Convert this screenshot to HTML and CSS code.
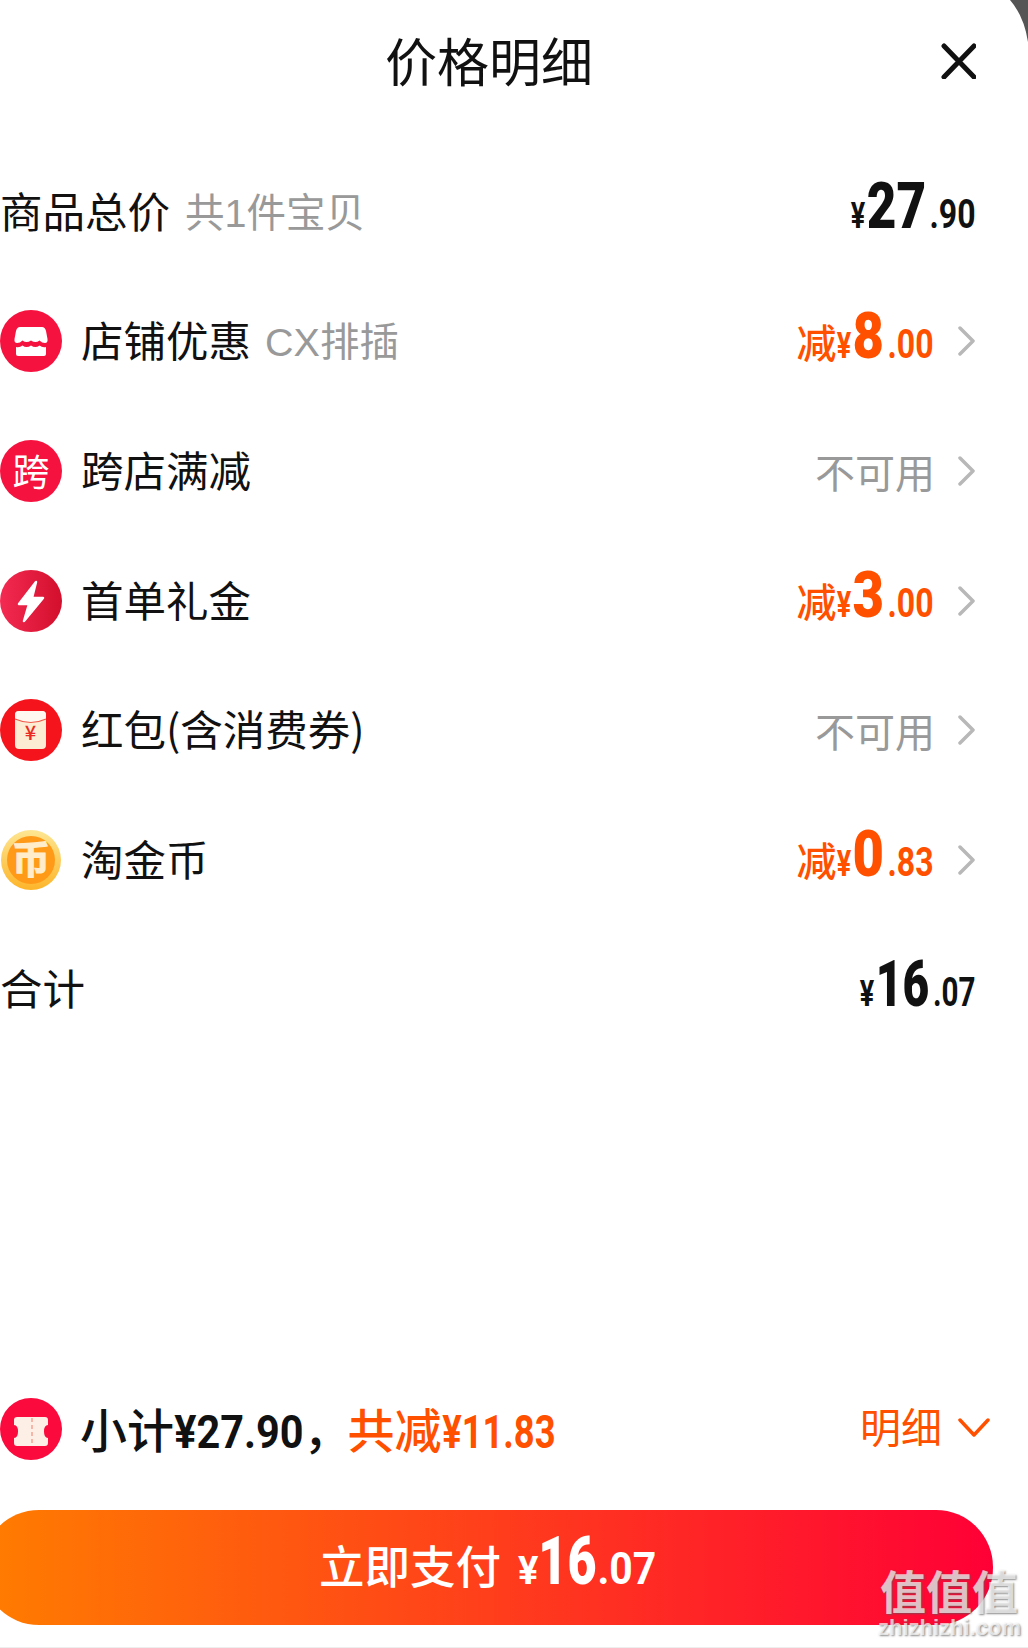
FILE: index.html
```html
<!DOCTYPE html>
<html lang="zh-CN">
<head>
    <meta charset="UTF-8">
    <meta name="viewport" content="width=device-width, initial-scale=1.0">
    <title>价格明细</title>
    <link rel="stylesheet" href="styles.css">
</head>
<body>
    <div class="sheet">
        <svg class="corner" width="20" height="42" viewBox="0 0 20 42"><path d="M2 0Q16 16 20 42V0Z" fill="#555"/></svg>

        <header class="header">
            <span></span>
            <h1>价格明细</h1>
            <svg class="close" width="36" height="36" viewBox="0 0 36 36"><path d="M4 3L34 34M34 3L4 34" stroke="#111" stroke-width="5" stroke-linecap="round"/></svg>
        </header>

        <div class="rows">
            <div class="row">
                <div class="label">商品总价<span class="note first">共1件宝贝</span></div>
                <div class="price"><span class="yen">¥</span><span class="big two">27</span><span class="cents">.90</span></div>
            </div>

            <div class="row">
                <div class="label">
                    <svg class="icon" viewBox="0 0 62 62"><circle cx="31" cy="31" r="31" fill="#f6123f"/><path d="M20 17H42Q45 17 46 21L47.500 29Q48 33 45 33Q42 33 39.500 30.500Q35.500 33.500 31 30.500Q26.500 33.500 22.500 30.500Q20 33 17 33Q14 33 14.500 29L16 21Q17 17 20 17Z" fill="#fff"/><path d="M16 37Q19.500 38 22.500 35.500Q26.500 38.500 31 35.500Q35.500 38.500 39.500 35.500Q42.500 38 46 37V44Q46 46 44 46H18Q16 46 16 44Z" fill="#fff"/></svg>
                    店铺优惠<span class="note">CX排插</span>
                </div>
                <div class="value">
                    <div class="price off"><span class="jian">减</span><span class="yen">¥</span><span class="big">8</span><span class="cents">.00</span></div>
                    <svg class="arrow" width="18" height="30" viewBox="0 0 18 30"><path d="M3 2L16 15L3 28" fill="none" stroke="#b8b8b8" stroke-width="3.500" stroke-linecap="round" stroke-linejoin="round"/></svg>
                </div>
            </div>

            <div class="row">
                <div class="label">
                    <div class="icon icon-text">跨</div>
                    跨店满减
                </div>
                <div class="value">
                    <span class="na">不可用</span>
                    <svg class="arrow" width="18" height="30" viewBox="0 0 18 30"><path d="M3 2L16 15L3 28" fill="none" stroke="#b8b8b8" stroke-width="3.500" stroke-linecap="round" stroke-linejoin="round"/></svg>
                </div>
            </div>

            <div class="row">
                <div class="label">
                    <svg class="icon" viewBox="0 0 62 62"><defs><linearGradient id="boltBg"><stop offset="0" stop-color="#f42a52"/><stop offset="1" stop-color="#d20f2c"/></linearGradient></defs><circle cx="31" cy="31" r="31" fill="url(#boltBg)"/><path d="M36 12L19 34H29L24 51L43 28H32Z" fill="#fff" stroke="#fff" stroke-width="2.500" stroke-linejoin="round"/></svg>
                    首单礼金
                </div>
                <div class="value">
                    <div class="price off"><span class="jian">减</span><span class="yen">¥</span><span class="big">3</span><span class="cents">.00</span></div>
                    <svg class="arrow" width="18" height="30" viewBox="0 0 18 30"><path d="M3 2L16 15L3 28" fill="none" stroke="#b8b8b8" stroke-width="3.500" stroke-linecap="round" stroke-linejoin="round"/></svg>
                </div>
            </div>

            <div class="row">
                <div class="label">
                    <svg class="icon" viewBox="0 0 62 62"><circle cx="31" cy="31" r="31" fill="#f5141c"/><rect x="15" y="12" width="31" height="38" rx="4" fill="#fdecd4"/><path d="M15 20Q31 27 46 20V16Q46 12 42 12H19Q15 12 15 16Z" fill="#fff8f0"/><path d="M15 20Q31 27 46 20" fill="none" stroke="#f2594a" stroke-width="1.200"/><text x="30.500" y="41" class="envelope-yen">¥</text></svg>
                    红包(含消费券)
                </div>
                <div class="value">
                    <span class="na">不可用</span>
                    <svg class="arrow" width="18" height="30" viewBox="0 0 18 30"><path d="M3 2L16 15L3 28" fill="none" stroke="#b8b8b8" stroke-width="3.500" stroke-linecap="round" stroke-linejoin="round"/></svg>
                </div>
            </div>

            <div class="row">
                <div class="label">
                    <svg class="icon" viewBox="0 0 62 62"><defs><linearGradient id="coinBg" x1="0" y1="0" x2="0" y2="1"><stop offset="0" stop-color="#fde692"/><stop offset="1" stop-color="#fdb52a"/></linearGradient></defs><circle cx="31" cy="31" r="30" fill="url(#coinBg)"/><circle cx="31" cy="31" r="24" fill="#ff9a18"/><text x="31" y="44" class="coin-text">币</text></svg>
                    淘金币
                </div>
                <div class="value">
                    <div class="price off"><span class="jian">减</span><span class="yen">¥</span><span class="big">0</span><span class="cents">.83</span></div>
                    <svg class="arrow" width="18" height="30" viewBox="0 0 18 30"><path d="M3 2L16 15L3 28" fill="none" stroke="#b8b8b8" stroke-width="3.500" stroke-linecap="round" stroke-linejoin="round"/></svg>
                </div>
            </div>

            <div class="row">
                <div class="label">合计</div>
                <div class="price total"><span class="yen">¥</span><span class="big two">16</span><span class="cents">.07</span></div>
            </div>
        </div>

        <footer class="footer">
            <div class="summary">
                <div class="summary-left">
                    <svg class="icon" viewBox="0 0 62 62"><circle cx="31" cy="31" r="31" fill="#fb0a3e"/><path d="M17 19H45Q48 19 48 22V27Q44 27 44 33.500Q44 40 48 40V45Q48 48 45 48H17Q14 48 14 45V40Q18 40 18 33.500Q18 27 14 27V22Q14 19 17 19Z" fill="#fdeee6"/><path d="M32 20V48" stroke="#f7b5a8" stroke-width="2" stroke-dasharray="4 3"/></svg>
                    <span class="sum-black">小计<span class="sum-num">¥27.90</span>，</span><span class="sum-orange">共减<span class="sum-num narrow">¥11.83</span></span>
                </div>
                <div class="detail">明细
                    <svg width="32" height="20" viewBox="0 0 32 20"><path d="M2 2L16 17L30 2" fill="none" stroke="#ff5000" stroke-width="3.500" stroke-linecap="round" stroke-linejoin="round"/></svg>
                </div>
            </div>
            <button class="pay">立即支付<span class="pay-price"><span class="pay-yen">¥</span><span class="pay-big">16</span><span class="pay-cents">.07</span></span></button>
        </footer>

        <div class="watermark">
            <div class="wm-cn">值值值</div>
            <div class="wm-en">zhizhizhi.com</div>
        </div>
    </div>
</body>
</html>
```

FILE: styles.css
```css
:root {
    --text-color: #111;
    --grey: #999;
    --orange: #ff5000;
}
* { box-sizing: border-box; }
html, body { margin: 0; padding: 0; }
body {
    font-family: "Noto Sans CJK SC", "Noto Sans", sans-serif;
    color: var(--text-color);
    background: #fff;
}
.sheet {
    position: relative;
    width: 1028px;
    height: 1648px;
    overflow: hidden;
    display: flex;
    flex-direction: column;
    border-bottom: 1px solid #eee;
}
.corner { position: absolute; top: 0; right: 0; }

.header {
    height: 147px;
    padding: 0 52px 29px 2px;
    display: grid;
    grid-template-columns: 1fr auto 1fr;
    align-items: center;
}
.header h1 { margin: 0; font-size: 52px; font-weight: 400; line-height: 120px; }
.close { justify-self: end; margin-top: 2px; }

.row {
    height: 129.6px;
    padding-right: 53px;
    display: flex;
    align-items: center;
    justify-content: space-between;
}
.label {
    display: flex;
    align-items: center;
    padding-bottom: 4px;
    font-size: 42.500px;
    line-height: 62px;
}
.icon { width: 62px; height: 62px; margin: 4px 19px 0 0; flex: none; }
.icon-text {
    border-radius: 50%;
    background: #f6123f;
    color: #fff;
    font-size: 37px;
    line-height: 60px;
    text-align: center;
}
.envelope-yen { font: 500 20px "Noto Sans CJK SC", sans-serif; fill: #ea2a22; text-anchor: middle; }
.coin-text {
    font: 700 38px "Noto Sans CJK SC", sans-serif;
    fill: #ffeccb;
    stroke: #ffeccb;
    stroke-width: 1.2px;
    text-anchor: middle;
}
.note {
    color: var(--grey);
    font-family: "Liberation Sans", "Noto Sans CJK SC", sans-serif;
    font-size: 39.500px;
    margin: 6px 0 0 14px;
}
.first { margin-left: 15px; }

.value { display: flex; align-items: center; }
.arrow { margin-left: 24px; flex: none; }
.na { color: var(--grey); font-size: 40px; margin-right: -2px; }

/* no condensed face installed, so digits are squeezed from the right edge */
.price {
    display: flex;
    align-items: baseline;
    font-family: Roboto, sans-serif;
    font-weight: 900;
    line-height: 70px;
}
.yen, .big, .cents, .sum-num, .pay-yen, .pay-big, .pay-cents {
    display: inline-block;
    transform-origin: right;
}
.price .yen { font-size: 36px; font-weight: 700; transform: scaleX(.75); margin: 0 2px 0 -5px; }
.price .big { font-size: 64px; transform: scaleX(.85); margin-left: -5.500px; }
.price .big.two { transform: scaleX(.8); margin-left: -15px; }
.price .cents { font-size: 40px; font-weight: 700; transform: scaleX(.8); margin-left: -9px; }
.total .big.two { transform: scaleX(.72); margin-left: -20.500px; }
.total .cents { transform: scaleX(.74); margin-left: -12px; }
.off { color: var(--orange); }
.jian { font: 500 40px "Noto Sans CJK SC", sans-serif; }

.footer { margin-top: auto; padding-bottom: 22px; }
.summary {
    height: 62px;
    margin-bottom: 51px;
    padding-right: 38px;
    display: flex;
    align-items: center;
    justify-content: space-between;
}
.summary-left { display: flex; align-items: center; font-size: 47px; font-weight: 500; line-height: 62px; padding-top: 4px; }
.summary-left .icon { margin: 0 18px 2px 0; }
.sum-black { white-space: nowrap; }
.sum-orange { margin-left: -3px; color: var(--orange); white-space: nowrap; }
.sum-num {
    font-family: Roboto, sans-serif;
    font-size: 46px;
    font-weight: 700;
    transform: scaleX(.9);
    margin-left: -14px;
}
.sum-num.narrow { transform: scaleX(.79); margin-left: -30px; }
.detail {
    display: flex;
    align-items: center;
    gap: 16px;
    padding-bottom: 6px;
    color: var(--orange);
    font-size: 41px;
    line-height: 54px;
}
.detail svg { margin-top: 6px; }

.pay {
    display: flex;
    align-items: baseline;
    justify-content: center;
    width: 1011px;
    height: 115px;
    margin-left: -18px;
    padding: 0;
    border: 0;
    border-radius: 57px;
    background: linear-gradient(90deg, #ff7d00, #ff0036);
    color: #fff;
    font-family: "Noto Sans CJK SC", sans-serif;
    font-size: 45.500px;
    font-weight: 500;
    line-height: 104px;
}
.pay-price {
    margin-left: 17px;
    font-family: Roboto, sans-serif;
    font-weight: 700;
}
.pay-yen { font-size: 38px; }
.pay-big { font-size: 66px; font-weight: 900; transform: scaleX(.76); margin-left: -18px; }
.pay-cents { font-size: 44px; transform: scaleX(.93); margin-left: -4px; }

.watermark {
    position: absolute;
    right: 8px;
    bottom: 6px;
    width: 142px;
    color: rgba(255, 255, 255, 0.7);
    text-shadow: 1px 1px 2px rgba(90, 90, 90, 0.7);
    text-align: center;
    font-weight: 700;
}
.wm-cn { font-size: 46px; line-height: 46px; white-space: nowrap; }
.wm-en { margin-top: 3px; font-family: "Liberation Sans", sans-serif; font-size: 22px; line-height: 26px; }
```
